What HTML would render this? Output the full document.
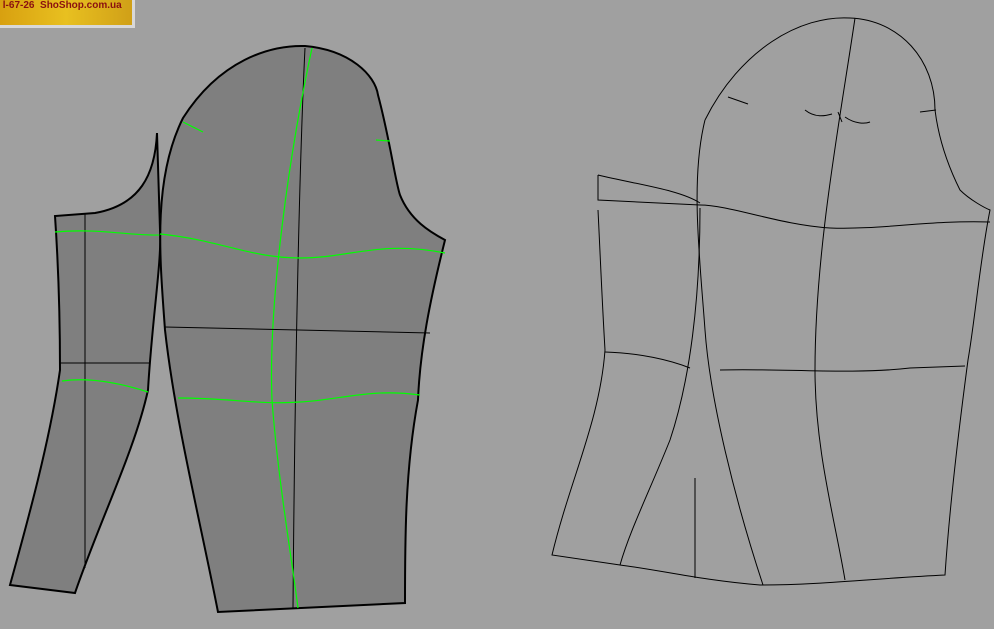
<!DOCTYPE html>
<html><head><style>
html,body{margin:0;padding:0;width:994px;height:629px;overflow:hidden;background:#a0a0a0}
.logo{position:absolute;left:0;top:0;width:132px;height:25px;background:linear-gradient(90deg,#d8a010,#e8c020 50%,#d0a018);border-right:3px solid #d8d8d8;border-bottom:3px solid #d8d8d8;font:bold 10px "Liberation Sans",sans-serif;color:#8a1010;line-height:12px;padding-left:0}
</style></head><body>
<div class="logo">&nbsp;l-67-26&nbsp; ShoShop.com.ua</div>
<svg width="994" height="629" style="position:absolute;left:0;top:0" fill="none">
<!-- left under sleeve -->
<path d="M157,133 C155,175 140,205 95,213 L55,216 C58,260 60,320 60,370 C50,440 28,520 10,585 L75,593 C100,520 135,450 148,390 C152,320 162,260 160,230 Z" fill="#7f7f7f" stroke="#000" stroke-width="2"/>
<path d="M85,213 L85,568" stroke="#000" stroke-width="1"/>
<path d="M60,363 L150,363" stroke="#000" stroke-width="1"/>
<path d="M55,232 C100,228 130,236 160,235" stroke="#0f0" stroke-width="1.2"/>
<path d="M62,381 C90,377 120,383 148,392" stroke="#0f0" stroke-width="1.2"/>
<!-- big sleeve -->
<path d="M183,118 C220,60 270,45 305,46 C350,50 375,75 378,95 C390,140 395,180 400,195 C410,220 430,232 445,240 C430,300 420,350 418,400 C405,470 405,540 405,603 L218,612 C200,520 175,420 165,330 C160,260 152,180 183,118 Z" fill="#7f7f7f" stroke="#000" stroke-width="2"/>
<path d="M305,48 C300,150 295,350 293,608" stroke="#000" stroke-width="1"/>
<path d="M312,48 C290,150 268,300 272,400 C278,480 292,560 298,608" stroke="#0f0" stroke-width="1.2"/>
<path d="M160,234 C220,240 250,258 300,258 C350,258 380,240 445,253" stroke="#0f0" stroke-width="1.2"/>
<path d="M165,327 L430,333" stroke="#000" stroke-width="1"/>
<path d="M178,398 C230,398 260,405 300,402 C340,400 370,388 420,395" stroke="#0f0" stroke-width="1.2"/>
<path d="M183,122 L203,132 M376,140 L390,141" stroke="#0f0" stroke-width="1.2"/>
<!-- right outline pattern -->
<g stroke="#000" stroke-width="1">
<path d="M705,120 C740,50 800,15 850,18 C900,20 935,60 935,110 C940,150 955,180 960,190 C970,200 985,208 990,210 C980,260 975,320 968,360 C960,420 950,500 945,575 C880,578 820,585 760,585 C700,580 660,570 620,565 L552,555 C570,480 600,420 605,350 C602,300 600,250 598,210"/>
<path d="M598,175 L598,200 L700,205 M598,175 C640,185 680,190 700,203 M598,200 L700,205"/>
<path d="M705,120 C690,180 700,260 705,330 C710,400 735,500 763,585"/>
<path d="M700,205 C730,205 780,225 830,228 C880,230 930,220 990,222"/>
<path d="M855,18 C840,120 815,250 815,370 C815,450 835,520 845,580"/>
<path d="M700,208 C700,300 690,380 670,440 C650,490 630,530 620,565"/>
<path d="M605,352 C640,353 670,360 690,368"/>
<path d="M720,370 C780,368 850,375 910,368 L965,366"/>
<path d="M695,478 L695,578"/>
<path d="M728,97 L748,104 M920,112 L936,110"/>
<path d="M805,110 C815,118 825,116 832,114 M845,117 C855,124 865,124 870,122 M838,112 L842,122"/>
</g>
</svg>
</body></html>
